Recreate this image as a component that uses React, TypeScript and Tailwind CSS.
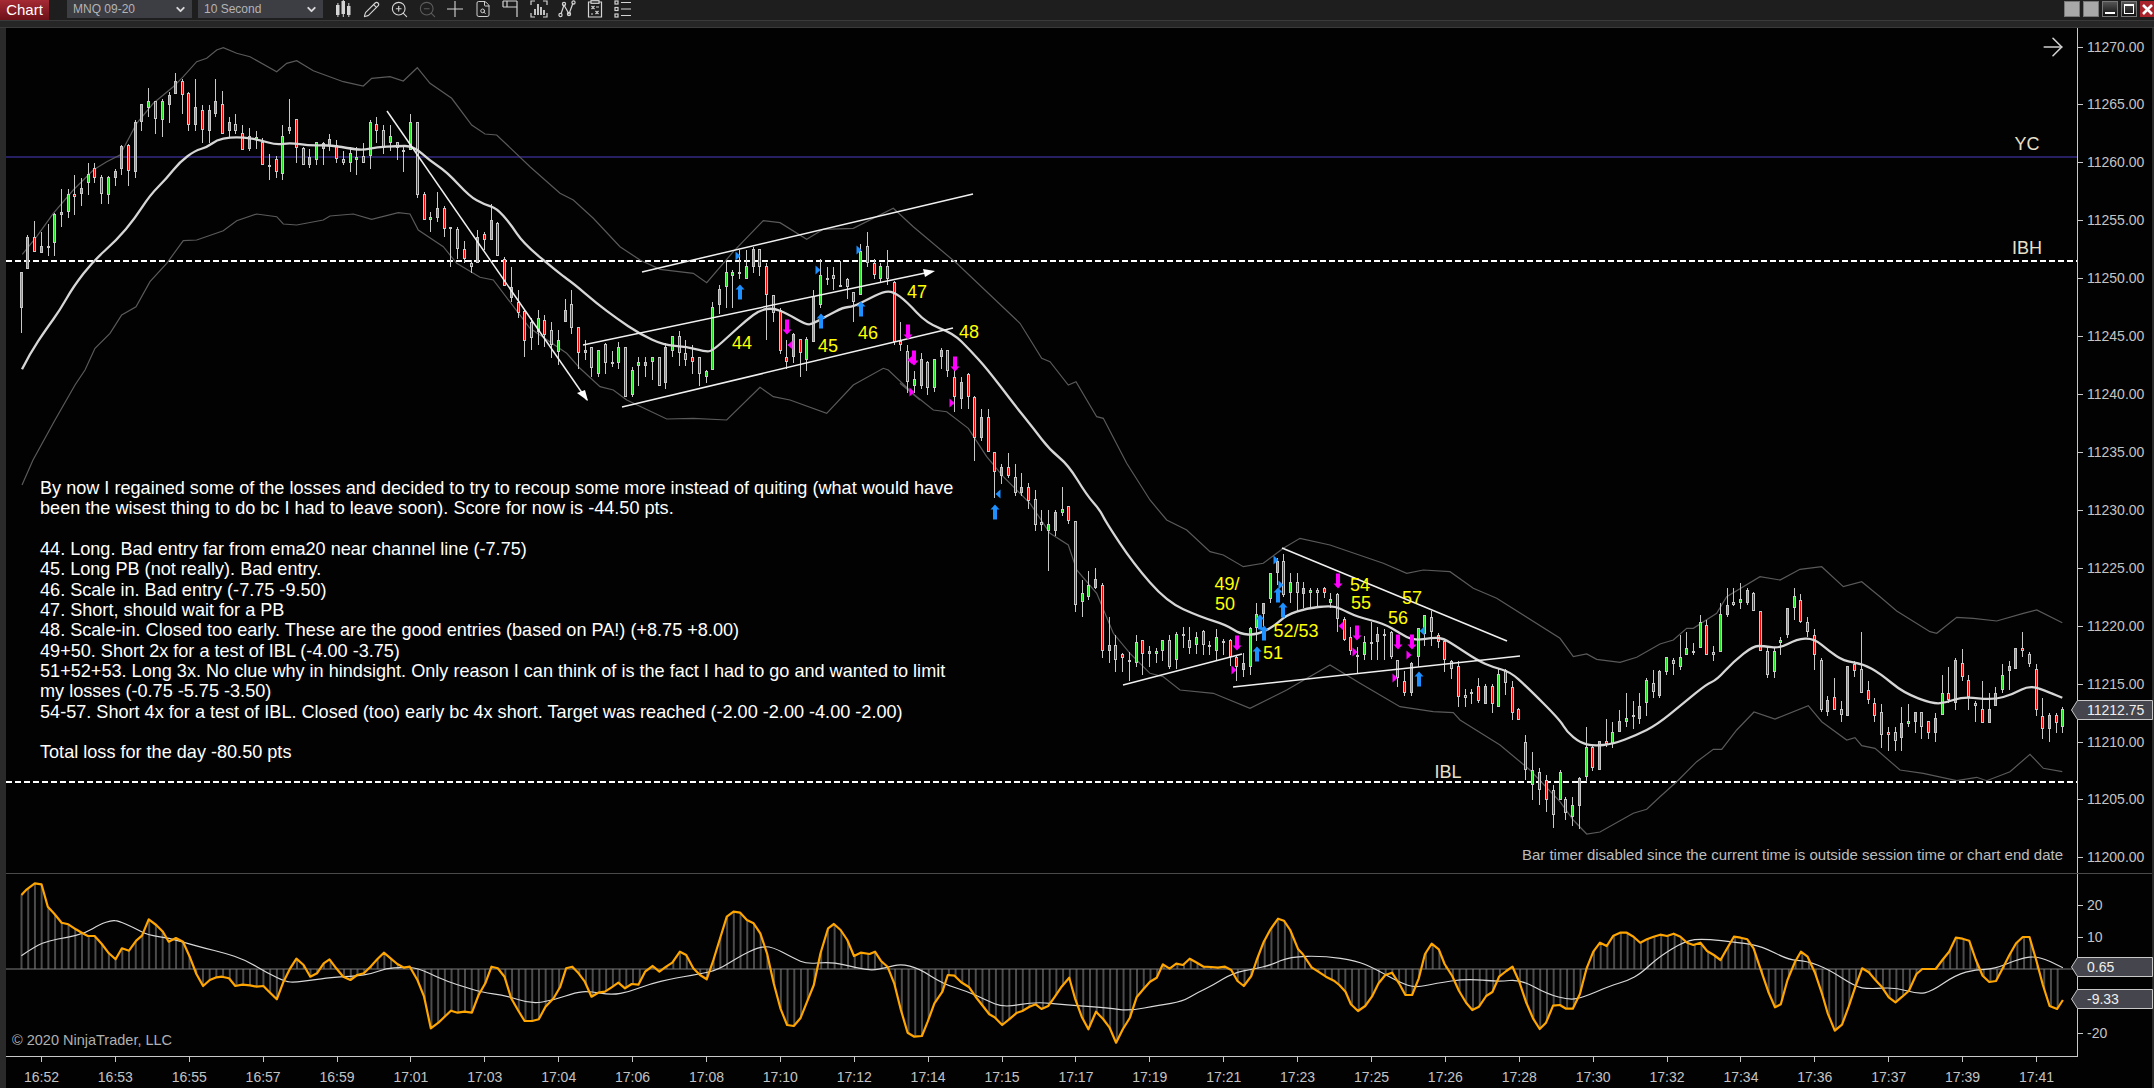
import { ArrowRight, ChevronDown, FileSearch, Pencil, ZoomIn, ZoomOut } from "lucide-react"

type Pt = [number, number]

// chart data read off the screen, each block in its own crop coordinates
function toPts(ox: number, oy: number, sx: number, sy: number, raw: string): Pt[] {
  return raw
    .trim()
    .split(/\s+/)
    .map((p) => {
      const [x, y] = p.split(",").map(Number)
      return [ox + x / sx, oy + y / sy] as Pt
    })
}

const asPath = (pts: Pt[]) => pts.map((p) => `${p[0].toFixed(1)},${p[1].toFixed(1)}`).join(" ")

// rounds the corners off a hand-read line
function smooth(pts: Pt[]) {
  let d = `M${pts[0][0].toFixed(1)} ${pts[0][1].toFixed(1)}`
  for (let i = 1; i < pts.length - 1; i++) {
    const mx = (pts[i][0] + pts[i + 1][0]) / 2
    const my = (pts[i][1] + pts[i + 1][1]) / 2
    d += ` Q${pts[i][0].toFixed(1)} ${pts[i][1].toFixed(1)} ${mx.toFixed(1)} ${my.toFixed(1)}`
  }
  const last = pts[pts.length - 1]
  return `${d} L${last[0].toFixed(1)} ${last[1].toFixed(1)}`
}

const ema = [
  ...toPts(10, 30, 3, 3, "36,1018 60,970 110,895 150,840 190,770 250,693 320,630 375,565 420,495 470,445 510,395 555,362 590,352 620,330 660,322 700,322 750,330 800,345 840,338 900,347 960,345 1030,357 1060,360 1100,352 1160,348 1210,348 1260,392 1310,425 1380,500 1420,522 1460,535 1500,580 1540,640"),
  ...toPts(560, 180, 3, 3, "0,282 40,310 110,370 170,415 240,462 310,495 380,500 440,516 460,510 510,465 560,420 600,390 640,384 680,400 740,435 760,430 800,408 850,382 880,380 920,360 970,335 1000,335 1040,365 1100,430 1180,460 1230,510 1280,565"),
  ...toPts(900, 300, 3, 3, "340,310 400,385 450,450 505,495 560,585 600,630"),
  ...toPts(1100, 520, 3, 3, "20,10 100,130 200,245 300,290 380,315 420,342 470,345 520,320 560,285 620,265 690,257 720,265 770,290 850,310 900,340 940,362 1000,353 1030,355 1070,380 1130,420 1180,442 1230,455 1280,500"),
  ...toPts(1560, 540, 3, 3, "0,540 20,575 60,608 100,618 160,612 230,585 290,555 370,490 440,432 470,420 520,365 580,318 610,318 660,325 710,298 760,294 810,335 850,362 910,372 960,400 1030,458 1120,492 1160,487 1210,470 1300,480 1360,462 1410,435 1470,458 1507,473"),
]

const upperBand = [
  ...toPts(10, 30, 3, 3, "37,673 80,620 130,550 190,480 250,420 290,395 330,375 380,280 430,220 490,170 520,140 560,95 590,85 620,60 640,53 680,70 720,80 800,125 830,100 860,92 910,122 1000,155 1060,168 1085,145 1140,140 1180,153 1222,113 1260,160 1325,205 1385,285 1425,312 1460,315 1560,410"),
  ...toPts(560, 180, 3, 3, "0,40 40,60 100,115 180,200 240,240 300,268 400,280 440,308 520,215 610,122 660,128 740,178 790,148 880,145 1000,85 1060,140 1190,250"),
  ...toPts(900, 300, 3, 3, "360,70 425,175 450,185 505,255 528,245 590,350 610,355 680,490 750,600"),
  ...toPts(1100, 520, 3, 3, "200,0 260,30 330,95 370,105 430,140 490,130 550,85 600,55 690,75 850,130 920,160 970,150 1050,155 1120,205 1190,235"),
  ...toPts(1560, 540, 3, 3, "0,295 40,350 80,342 110,358 180,367 230,352 300,312 340,300 380,265 400,265 470,220 500,170 600,110 660,120 720,88 785,80 850,140 905,125 960,170 1010,213 1110,275 1130,280 1190,232 1240,235 1310,243 1390,220 1430,210 1507,248"),
]

const lowerBand = [
  ...toPts(0, 0, 1, 1, "22,485 33,460 55,420 75,385"),
  ...toPts(10, 30, 3, 3, "225,1020 255,955 300,910 335,855 378,830 420,755 470,700 520,632 560,630 640,602 680,572 740,552 800,560 820,582 860,585 940,570 960,558 1030,552 1085,568 1165,548 1200,552 1225,600 1300,650 1340,700 1410,742 1450,750 1560,895"),
  ...toPts(560, 180, 3, 3, "20,520 60,565 120,620 160,630 200,660 320,717 400,715 500,720 600,622 640,650 690,660 800,700 880,615 970,565 985,570 1080,660"),
  ...toPts(900, 300, 3, 3, "0,250 100,330 140,335 205,385 260,470 310,530 390,610 450,700 505,735 530,810 590,880 640,1000 690,1060 750,1120"),
  ...toPts(1100, 520, 3, 3, "190,470 240,510 340,520 450,565 560,510 690,435 780,490 900,560 1000,575 1060,578 1080,600 1200,675 1290,750"),
  ...toPts(1560, 540, 3, 3, "0,785 40,840 80,882 120,876 220,820 260,808 300,770 350,725 410,665 460,628 485,628 530,570 582,516 645,537 745,497 785,545 860,600 885,593 905,617 945,625 1020,690 1090,700 1190,722 1250,712 1280,722 1350,695 1410,643 1450,685 1507,695"),
]

const orange = [
  ...toPts(0, 860, 2.24, 3, "48,105 60,88 78,70 93,73 107,140 122,162 138,188 153,193 170,208 185,220 197,228 212,228 228,252 244,280 259,298 273,265 289,272 305,242 318,227 333,178 350,195 365,215 378,245 394,234 410,245 425,290 440,342 455,378 470,360 485,352 497,350 513,355 527,378 543,374 560,376 575,380 590,378 605,398 620,418 635,365 650,325 664,296 680,315 695,350 710,340 725,310 738,298 753,325 769,350 785,360 800,345 815,340 830,320 845,298 860,278 875,295 890,312 905,323 918,320 935,360 950,410 965,505 982,488 1010,452 1025,458 1040,455 1057,458 1072,405 1087,370 1101,320 1115,325 1130,350 1145,415 1160,450 1175,483 1192,483 1207,478 1222,440 1240,415 1255,380 1268,325 1282,320 1296,340 1310,365 1325,410 1340,398 1355,395 1370,382 1385,368 1400,385 1415,372 1430,374 1445,335 1462,318 1477,335 1492,320 1506,308 1523,275 1537,285 1553,325"),
  ...toPts(700, 870, 2.24, 3, "0,315 15,328 30,270 45,205 60,140 75,125 90,128 105,150 120,160 135,190 150,250 165,340 180,415 195,465 210,468 225,445 240,395 255,345 270,250 287,175 300,162 315,180 330,210 345,258 360,248 380,252 392,245 405,272 420,290 435,340 450,420 465,488 480,500 497,498 510,455 525,400 543,365 555,315 570,317 585,337 603,352 620,385 648,433 660,442 677,465 695,445 710,428 722,423 738,410 752,403 765,417 780,408 795,380 810,350 827,323 840,385 855,440 870,478 887,425 903,447 917,472 932,518 947,478 963,443 978,382 993,358 1008,335 1023,323 1037,283 1052,296 1067,281 1082,285 1097,266 1113,278 1128,290 1145,291 1160,293 1176,290 1190,300 1204,333 1218,348 1235,318 1247,270 1263,215 1278,178 1295,146 1308,152 1322,180 1340,238 1350,252 1370,292 1385,305 1402,320 1420,332 1432,345 1446,365 1458,403 1474,423 1490,408 1505,380 1520,340 1535,315 1550,308"),
  ...toPts(1400, 870, 2.24, 3, "0,345 12,375 27,375 42,325 56,252 71,221 87,238 100,282 117,318 132,362 148,398 162,420 177,410 193,378 207,366 222,320 238,303 252,290 267,335 282,395 298,445 313,477 327,458 343,407 358,405 372,416 387,416 403,372 418,295 433,245 448,218 463,228 478,197 493,188 508,188 523,200 538,218 553,208 568,200 583,194 598,198 613,191 628,200 643,218 657,225 673,218 688,243 703,255 718,270 733,235 748,200 763,203 778,208 792,235 807,295 825,365 840,412 853,403 868,330 885,275 898,245 913,260 930,310 945,370 958,430 974,482 990,464 1005,410 1020,350 1035,295 1050,307 1065,330 1080,352 1095,382 1110,397 1125,380 1140,362 1157,312 1170,297 1200,297 1215,270 1230,245 1245,203 1260,206 1275,212 1290,270 1305,317 1320,336 1335,333 1350,295 1365,255 1380,220 1395,201 1410,201 1425,270 1440,345 1455,408 1472,417 1485,390"),
]

const signal = [
  ...toPts(0, 860, 2.24, 3, "48,287 80,258 110,242 150,232 190,220 225,192 250,181 265,183 300,203 330,225 380,235 420,250 460,265 500,278 550,300 600,340 640,365 660,367 700,360 740,353 800,347 830,342 865,325 900,322 935,323 985,355 1020,372 1080,398 1130,405 1190,432 1240,420 1290,397 1320,394 1370,405 1410,395 1460,370 1500,358 1530,350"),
  ...toPts(700, 870, 2.24, 3, "0,312 40,300 90,258 130,232 160,229 210,265 240,282 285,276 320,283 380,303 420,292 450,282 490,295 545,342 600,365 640,390 680,413 750,395 820,405 915,413 960,423 1030,405 1080,395 1115,367 1150,345 1195,308 1240,297 1280,285 1320,260 1400,258 1470,272 1510,295"),
  ...toPts(1400, 870, 2.24, 3, "0,338 35,353 80,340 150,326 220,335 270,328 330,372 380,390 410,382 470,348 510,332 540,310 580,260 640,212 680,206 760,218 810,228 870,270 910,272 960,298 1020,350 1050,357 1110,352 1160,372 1190,365 1245,315 1290,298 1330,298 1390,265 1430,258 1485,293"),
]

// x wickTop bodyTop bodyBottom wickBottom colour
const candleBlocks: { ox: number; oy: number; s: number; rows: string }[] = [
  {
    ox: 10, oy: 30, s: 3,
    rows: `34 727 727 833 910 g|52 615 622 718 718 g|73 573 622 667 667 r|94 607 648 668 668 g|113 583 648 652 678 g|133 548 553 640 677 g|154 477 545 554 590 g|175 478 493 545 563 g|193 435 493 502 555 r|214 445 475 493 527 g|235 400 433 458 495 g|253 400 415 443 458 r|274 435 441 493 521 r|295 437 441 494 521 g|316 418 423 443 467 g|334 345 347 416 435 g|355 343 346 424 467 r|376 270 277 425 443 g|394 222 223 277 302 g|415 175 213 233 260 g|436 213 214 268 311 r|457 208 212 269 320 g|476 185 195 224 278 g|496 130 154 191 191 g|517 148 154 196 251 r|535 185 190 284 302 r|556 148 232 284 302 g|577 226 241 301 338 r|598 226 240 302 338 g|616 148 214 251 260 g|637 183 223 311 311 r|658 262 277 302 320 g|676 252 283 302 312 r|697 285 310 361 361 r|718 295 319 356 362 g|739 304 320 329 356 g|757 325 337 406 406 r|778 372 405 407 449 g|799 378 388 425 443 r|817 285 319 433 449 g|838 208 292 302 312 g|859 268 268 355 398 r|880 350 355 406 406 r|898 358 381 406 415 g|919 337 337 389 406 g|940 335 338 356 406 g|958 312 328 348 362 g|979 330 346 388 398 r|1000 362 388 398 406 r|1021 350 370 398 426 g|1039 350 381 389 434 g|1060 340 379 398 398 r|1081 270 277 377 416 g|1099 262 283 302 338 r|1120 285 301 350 371 r|1141 285 319 338 362 g|1162 337 337 355 389 r|1180 350 360 362 425 g|1201 253 277 361 361 g|1222 277 277 494 503 r|1243 487 493 571 571 r|1261 546 562 571 605 g|1282 487 535 563 577 g|1303 527 535 598 622 r|1321 590 590 598 710 r|1342 590 597 658 686 r|1363 633 658 686 700 r|1384 690 700 710 728 r|1402 600 622 700 700 g|1423 605 613 631 660 r|1444 522 571 631 631 g|1462 575 580 677 677 r|1483 680 686 768 768 r|1504 712 770 805 815 g|1525 780 815 850 865 r|1543 840 843 934 980 r`,
  },
  {
    ox: 0, oy: 0, s: 1,
    rows: `531 318 322 338 350 r|538 310 318 332 345 g|544 315 320 335 347 r|551 322 330 345 358 r|558 330 340 352 365 g`,
  },
  {
    ox: 560, oy: 180, s: 3,
    rows: `15 358 390 425 425 g|33 330 372 443 461 r|55 441 441 520 566 r|76 480 510 520 540 g|94 500 502 565 590 r|115 510 510 581 590 g|136 490 492 548 581 r|157 513 546 550 560 g|175 487 502 548 566 g|196 502 502 650 650 r|217 560 570 645 650 g|235 530 547 557 617 g|256 530 547 557 590 g|277 530 530 547 600 g|298 530 530 617 617 r|316 490 500 608 627 g|337 467 468 512 530 g|358 454 468 520 558 r|376 480 520 540 558 r|397 495 530 547 581 r|418 530 530 581 617 r|439 570 572 590 608 g|457 366 381 571 571 g|478 316 328 374 402 g|499 245 277 320 384 g|517 270 277 287 384 g|538 210 277 279 296 g|559 210 259 296 296 g|580 200 208 260 278 g|598 206 208 260 287 r|619 250 258 346 480 r|640 346 346 400 426 r|661 385 391 512 521 r|679 480 530 546 566 r|700 459 461 530 548 g|721 477 478 520 590 r|739 472 478 540 572 g|760 330 349 485 485 g|781 238 286 374 384 g|802 262 294 296 314 g|820 262 286 296 330 r|841 242 314 316 320 g|862 294 296 320 356 r|880 336 337 366 426 r|901 193 212 346 346 g|922 156 199 250 260 r|943 238 250 286 296 r|961 250 259 296 306 g|982 210 259 296 314 r|1003 304 305 485 495 r|1021 426 482 495 512 r|1042 495 512 607 640 r|1063 572 598 617 640 g|1084 520 538 617 627 g|1102 542 546 625 645 r|1123 538 538 625 635 g|1144 504 511 530 566 g|1162 510 511 572 590 r|1183 560 590 650 695 r|1204 590 606 658 686 g|1225 580 581 650 686 r`,
  },
  {
    ox: 900, oy: 300, s: 3,
    rows: `223 288 290 413 482 r|244 328 352 413 422 g|265 328 352 455 455 r|283 455 455 517 595 r|304 492 500 528 552 g|325 458 500 527 533 r|346 492 532 578 587 r|364 520 560 578 587 g|385 550 560 604 628 r|406 571 596 674 692 r|424 631 665 674 692 r|445 631 673 692 812 g|466 631 636 692 707 g|487 562 628 638 647 g|505 617 619 664 672 r|526 664 664 916 935 r|547 840 880 907 950 g|565 813 856 890 900 g|586 805 838 863 868 g|607 850 856 1054 1073 r|628 950 1036 1054 1090 g|646 1006 1036 1080 1115 r|667 1058 1063 1073 1115 r|688 1056 1080 1082 1142 g|709 1006 1027 1090 1100 g|727 1020 1021 1063 1124 r|748 1038 1054 1063 1100 g|769 1045 1054 1063 1090 g|787 1020 1021 1054 1082 g|808 1006 1021 1100 1108 r|829 996 1003 1080 1108 g|850 980 1002 1004 1045 g|868 980 1021 1045 1063 r|889 996 1012 1036 1063 g`,
  },
  {
    ox: 1100, oy: 520, s: 3,
    rows: `310 330 332 376 405 r|328 363 376 378 405 g|349 328 352 394 420 g|370 358 362 368 405 g|391 358 360 412 437 r|409 405 410 440 482 r|430 400 430 449 472 g|451 322 325 440 465 g|469 248 283 325 362 g|490 248 248 283 318 g|511 158 160 238 250 g|532 115 124 160 195 g|550 102 124 226 232 r|571 158 187 220 250 g|592 158 187 220 275 r|610 187 203 222 265 g|631 205 211 220 262 g|652 205 211 220 265 r|673 202 203 220 235 r|691 220 238 248 265 g|712 220 221 298 335 r|733 292 298 360 362 r|751 320 352 393 404 r|772 380 405 408 458 g|793 347 367 404 420 g|814 305 367 369 420 g|832 322 343 367 420 g|853 326 342 344 420 g|874 333 335 412 418 r|892 420 420 475 500 r|913 452 482 520 528 r|934 425 430 518 528 g|955 325 325 412 440 g|973 284 284 343 378 g|994 272 290 335 378 r|1015 340 344 367 385 r|1033 360 362 420 455 r|1054 420 422 448 476 r|1075 424 438 532 560 r|1096 506 526 533 560 r|1114 506 517 523 553 g|1135 475 498 542 550 r|1156 492 498 552 553 g|1177 492 498 552 578 r|1195 447 462 560 560 g|1216 448 450 490 525 r|1237 483 500 578 600 r|1255 565 567 600 600 r`,
  },
  {
    ox: 0, oy: 0, s: 1,
    rows: `1525 735 742 770 780 r|1532 752 770 785 800 g|1539 768 772 790 805 r|1546 775 780 800 812 r|1553 785 790 815 828 r|1560 770 772 800 800 g`,
  },
  {
    ox: 1560, oy: 540, s: 3,
    rows: `16 771 778 820 840 r|37 771 796 830 858 g|58 712 715 797 866 g|79 561 622 710 725 g|97 615 622 683 693 r|118 604 604 691 691 g|139 538 604 613 622 r|157 546 577 612 623 g|178 510 544 577 577 g|199 460 535 545 560 g|220 484 525 527 568 g|238 460 499 536 552 g|259 415 420 490 528 g|280 390 430 457 473 r|298 390 394 467 473 g|319 352 352 395 404 g|340 355 361 371 404 r|361 285 352 380 391 g|379 276 325 344 345 g|400 309 334 336 345 g|421 226 247 325 325 g|439 240 256 344 344 r|460 319 335 344 362 r|481 190 223 335 335 g|502 144 196 224 232 g|520 144 187 196 198 r|541 129 178 188 207 g|562 144 151 188 196 g|580 155 160 214 214 r|601 214 214 334 334 r|622 320 333 404 414 r|643 320 333 395 414 g|661 290 300 309 345 g|682 205 205 285 295 g|703 144 169 205 240 g|721 163 179 247 250 r|742 232 247 275 291 r|763 267 284 344 390 r|784 354 361 510 517 r|802 469 481 517 527 g|823 414 472 509 510 r|844 484 508 526 546 r|862 378 379 527 527 g|883 364 371 394 412 r|904 276 388 458 458 r|925 423 449 481 491 r|943 475 490 527 546 r|964 492 517 586 623 r|985 562 577 586 632 r|1006 562 577 604 632 r|1024 502 550 595 632 g|1045 492 544 552 560 g|1066 516 517 545 578 g|1084 515 517 560 596 r|1105 544 544 578 596 r|1126 520 535 578 605 g|1147 405 458 526 526 g|1165 382 458 481 490 r|1186 354 361 490 510 g|1207 327 370 412 422 r|1225 405 421 472 510 r|1246 484 490 499 545 r|1267 423 508 550 550 r|1288 460 508 550 550 g|1306 442 458 499 499 g|1327 373 404 450 458 g|1348 364 379 394 450 g|1366 325 325 388 388 g|1387 277 325 334 352 r|1408 337 343 371 381 r|1429 373 388 509 527 r|1447 475 527 568 596 r|1468 520 526 568 605 g|1489 518 526 550 578 r|1507 502 508 560 578 g`,
  },
]

const candles = candleBlocks.flatMap((b) =>
  b.rows.split("|").map((r) => {
    const f = r.split(" ")
    const n = f.slice(0, 5).map(Number)
    return {
      x: Math.round(b.ox + n[0] / b.s),
      high: Math.round(b.oy + n[1] / b.s),
      top: Math.round(b.oy + n[2] / b.s),
      bottom: Math.round(b.oy + n[3] / b.s),
      low: Math.round(b.oy + n[4] / b.s),
      up: f[5] === "g",
    }
  })
)

function valueAt(pts: Pt[], x: number) {
  for (let i = 1; i < pts.length; i++) {
    if (x <= pts[i][0]) {
      const [x0, y0] = pts[i - 1]
      const [x1, y1] = pts[i]
      return y0 + ((y1 - y0) * (x - x0)) / (x1 - x0 || 1)
    }
  }
  return pts[pts.length - 1][1]
}

const upArrow = (cx: number, cy: number) =>
  `${cx},${cy - 7.5} ${cx + 4.5},${cy - 2.5} ${cx + 2},${cy - 2.5} ${cx + 2},${cy + 7.5} ${cx - 2},${cy + 7.5} ${cx - 2},${cy - 2.5} ${cx - 4.5},${cy - 2.5}`
const downArrow = (cx: number, cy: number) =>
  `${cx},${cy + 7.5} ${cx + 4.5},${cy + 2.5} ${cx + 2},${cy + 2.5} ${cx + 2},${cy - 7.5} ${cx - 2},${cy - 7.5} ${cx - 2},${cy + 2.5} ${cx - 4.5},${cy + 2.5}`
const rightTri = (cx: number, cy: number) => `${cx - 2.5},${cy - 4.5} ${cx + 2.5},${cy} ${cx - 2.5},${cy + 4.5}`
const leftTri = (cx: number, cy: number) => `${cx + 2.5},${cy - 4.5} ${cx - 2.5},${cy} ${cx + 2.5},${cy + 4.5}`

const BLUE = "#1e90ff"
const PINK = "#ff00ff"

const markers: { points: string; fill: string }[] = [
  ...([[740, 292], [821, 321], [861, 309], [995, 512], [1257, 654], [1264, 633], [1283, 610], [1278, 595], [1419, 679], [1260, 622]] as Pt[]).map((p) => ({ points: upArrow(p[0], p[1]), fill: BLUE })),
  ...([[738, 256], [818, 270], [859, 250], [1276, 560], [1281, 585]] as Pt[]).map((p) => ({ points: rightTri(p[0], p[1]), fill: BLUE })),
  ...([[1422, 631], [998, 494]] as Pt[]).map((p) => ({ points: leftTri(p[0], p[1]), fill: BLUE })),
  ...([[787, 327], [908, 332], [914, 358], [955, 364], [1237, 643], [1338, 581], [1357, 633], [1398, 642], [1412, 642]] as Pt[]).map((p) => ({ points: downArrow(p[0], p[1]), fill: PINK })),
  ...([[912, 392], [952, 403], [1234, 670], [1355, 652], [1395, 678], [1409, 655]] as Pt[]).map((p) => ({ points: rightTri(p[0], p[1]), fill: PINK })),
  ...([[790, 345], [910, 360], [1341, 626]] as Pt[]).map((p) => ({ points: leftTri(p[0], p[1]), fill: PINK })),
]

const trendLines = [
  [387, 111, 587, 400],
  [642, 272, 973, 194],
  [583, 345, 930, 272],
  [622, 407, 953, 328],
  [1282, 548, 1507, 641],
  [1123, 685, 1242, 654],
  [1233, 687, 1520, 656],
]

const barXs = Array.from({ length: 304 }, (_, i) => 21.5 + i * 6.72)

const noteLines = [
  "By now I regained some of the losses and decided to try to recoup some more instead of quiting (what would have",
  "been the wisest thing to do bc I had to leave soon). Score for now is -44.50 pts.",
  "",
  "44. Long. Bad entry far from ema20 near channel line (-7.75)",
  "45. Long PB (not really). Bad entry.",
  "46. Scale in. Bad entry (-7.75 -9.50)",
  "47. Short, should wait for a PB",
  "48. Scale-in. Closed too early. These are the good entries (based on PA!) (+8.75 +8.00)",
  "49+50. Short 2x for a test of IBL (-4.00 -3.75)",
  "51+52+53. Long 3x. No clue why in hindsight. Only reason I can think of is the fact I had to go and wanted to limit",
  "my losses (-0.75 -5.75 -3.50)",
  "54-57. Short 4x for a test of IBL. Closed (too) early bc 4x short. Target was reached (-2.00 -2.00 -4.00 -2.00)",
  "",
  "Total loss for the day -80.50 pts",
]

const prices = ["11270.00", "11265.00", "11260.00", "11255.00", "11250.00", "11245.00", "11240.00", "11235.00", "11230.00", "11225.00", "11220.00", "11215.00", "11210.00", "11205.00", "11200.00"]

const times = ["16:52", "16:53", "16:55", "16:57", "16:59", "17:01", "17:03", "17:04", "17:06", "17:08", "17:10", "17:12", "17:14", "17:15", "17:17", "17:19", "17:21", "17:23", "17:25", "17:26", "17:28", "17:30", "17:32", "17:34", "17:36", "17:37", "17:39", "17:41"]

function CandlesIcon() {
  return (
    <svg width="18" height="18" viewBox="0 0 18 18" fill="#d4d4d4">
      <rect x="2" y="5" width="3.5" height="10" />
      <rect x="3.4" y="3" width="1" height="14" />
      <rect x="7.5" y="1" width="3.5" height="13" />
      <rect x="8.8" y="0" width="1" height="17" />
      <rect x="13" y="6" width="3.5" height="9" />
      <rect x="14.3" y="3" width="1" height="14" />
    </svg>
  )
}

function PropertiesIcon() {
  return (
    <svg width="18" height="18" viewBox="0 0 18 18" fill="none" stroke="#d4d4d4" strokeWidth="1.2">
      <path d="M1 1h14M15 1v16M1 7h14M1 1v6" />
      <path d="M5 1v6" />
    </svg>
  )
}

function BarsIcon() {
  return (
    <svg width="18" height="18" viewBox="0 0 18 18" fill="none" stroke="#d4d4d4" strokeWidth="1.2">
      <path d="M1 5V1h4M13 1h4v4M1 13v4h4M13 17h4v-4" />
      <path d="M5 15V9M8 15V4M11 15V7M14 15V10" strokeWidth="1.8" />
    </svg>
  )
}

function NodesIcon() {
  return (
    <svg width="18" height="18" viewBox="0 0 18 18" fill="none" stroke="#d4d4d4" strokeWidth="1.2">
      <path d="M3 14 6 5l5 9 4-11" />
      <circle cx="2.5" cy="15" r="1.6" />
      <circle cx="6" cy="4" r="1.6" />
      <circle cx="11" cy="14" r="1.6" />
      <circle cx="15.5" cy="2.5" r="1.6" />
    </svg>
  )
}

function StrategyIcon() {
  return (
    <svg width="18" height="18" viewBox="0 0 18 18" fill="none" stroke="#d4d4d4" strokeWidth="1.2">
      <path d="M5 2H2.5v15h13V2H13" />
      <rect x="5" y="0.7" width="8" height="2.6" />
      <path d="m5.5 6 3 3M8.5 6l-3 3M9.5 11l3 3M12.5 11l-3 3M7 14h-2M13 7h-3" />
    </svg>
  )
}

function ListIcon() {
  return (
    <svg width="18" height="18" viewBox="0 0 18 18" fill="none" stroke="#d4d4d4" strokeWidth="1.2">
      <rect x="1" y="1" width="3" height="3" />
      <rect x="1" y="7.5" width="3" height="3" />
      <rect x="1" y="14" width="3" height="3" />
      <path d="M7 2.5h10M7 9h10M7 15.5h10" />
    </svg>
  )
}

function Dropdown({ label }: { label: string }) {
  return (
    <div className="flex h-[18px] w-[125px] items-center justify-between bg-[#3d3d44] pl-[6px] pr-[5px] text-[12px] text-[#b4b4b4]">
      <span>{label}</span>
      <ChevronDown size={13} strokeWidth={3.5} className="text-[#d8d8d8]" />
    </div>
  )
}

function Toolbar() {
  const iconBox = "flex h-[18px] w-[28px] items-center justify-center"
  return (
    <div className="flex h-[20px] items-start bg-[#1e1e1e]">
      <div className="flex h-[20px] w-[49px] items-center justify-center bg-gradient-to-b from-[#a52a34] to-[#6e1018] text-[15px] text-white">
        Chart
      </div>
      <div className="ml-[18px] flex gap-[6px]">
        <Dropdown label="MNQ 09-20" />
        <Dropdown label="10 Second" />
      </div>
      <div className="ml-[6px] flex">
        <div className={iconBox}><CandlesIcon /></div>
        <div className={iconBox}><Pencil size={17} strokeWidth={1.6} className="text-[#d4d4d4]" /></div>
        <div className={iconBox}><ZoomIn size={19} strokeWidth={1.4} className="text-[#d4d4d4]" /></div>
        <div className={iconBox}><ZoomOut size={19} strokeWidth={1.4} className="text-[#5c5c5c]" /></div>
        <div className={iconBox}>
          <svg width="18" height="18" viewBox="0 0 18 18" stroke="#d4d4d4" strokeWidth="1.1"><path d="M9 1v16M1 9h16" /></svg>
        </div>
        <div className={iconBox}><FileSearch size={18} strokeWidth={1.3} className="text-[#d4d4d4]" /></div>
        <div className={iconBox}><PropertiesIcon /></div>
        <div className={iconBox}><BarsIcon /></div>
        <div className={iconBox}><NodesIcon /></div>
        <div className={iconBox}><StrategyIcon /></div>
        <div className={iconBox}><ListIcon /></div>
      </div>
      <div className="ml-auto flex gap-[3px] pt-px">
        <div className="h-[16px] w-[16px] border border-[#777] bg-[#a8a8a8]" />
        <div className="h-[16px] w-[16px] border border-[#777] bg-[#a8a8a8]" />
        <div className="flex h-[16px] w-[16px] items-end justify-center border border-[#777] bg-gradient-to-b from-[#555] to-[#111] pb-[2px]">
          <div className="h-[2px] w-[10px] bg-white" />
        </div>
        <div className="flex h-[16px] w-[16px] items-center justify-center border border-[#777] bg-gradient-to-b from-[#555] to-[#111]">
          <div className="h-[10px] w-[10px] border border-t-2 border-white" />
        </div>
        <div className="flex h-[16px] w-[14px] items-center justify-center bg-[#a8232c] text-white">
          <svg width="11" height="11" viewBox="0 0 11 11" stroke="#fff" strokeWidth="2.6"><path d="m1 1 9 9M10 1l-9 9" /></svg>
        </div>
      </div>
    </div>
  )
}

function PriceTag({ label, className }: { label: string; className: string }) {
  return (
    <div className={`absolute left-[-7px] flex h-[20px] w-[82px] items-center ${className}`}>
      <svg width="82" height="20" viewBox="0 0 82 20" className="absolute inset-0">
        <polygon points="0.5,10 6.5,0.5 81.5,0.5 81.5,19.5 6.5,19.5" fill="#45454d" stroke="#c8c8c8" />
      </svg>
      <span className="relative pl-[16px] text-[14px] text-[#eeeeee]">{label}</span>
    </div>
  )
}

function AxisRow({ label, className = "" }: { label: string; className?: string }) {
  return (
    <div className={`flex h-0 items-center ${className}`}>
      <div className="h-px w-[5px] bg-[#c8c8c8]" />
      <span className="ml-[4px] text-[14px] text-[#c4c4c4]">{label}</span>
    </div>
  )
}

function MainPlot() {
  return (
    <div className="relative h-[845px] w-[2071px] overflow-hidden bg-[#020202]">
      <svg width="2071" height="845" viewBox="6 28 2071 845" className="block">
        <line x1="6" x2="2077" y1="157" y2="157" stroke="#4a3fc4" />
        <line x1="6" x2="2077" y1="261" y2="261" stroke="#ffffff" strokeWidth="2" strokeDasharray="6 3" />
        <line x1="6" x2="2077" y1="782" y2="782" stroke="#ffffff" strokeWidth="2" strokeDasharray="6 3" />
        <polyline points={asPath(upperBand)} fill="none" stroke="#5a5a5a" strokeWidth="1.2" />
        <polyline points={asPath(lowerBand)} fill="none" stroke="#5a5a5a" strokeWidth="1.2" />
        <g shapeRendering="crispEdges">
          {candles.map((c, i) => (
            <g key={i}>
              <rect x={c.x} y={c.high} width="1" height={Math.max(c.low - c.high, 1)} fill="#c8c8c8" />
              <rect x={c.x - 1} y={c.top} width="3" height={Math.max(c.bottom - c.top, 2)} fill="#c8c8c8" />
              {c.bottom - c.top > 2 && (
                <rect x={c.x} y={c.top + 1} width="1" height={c.bottom - c.top - 2} fill={c.up ? "#22dd22" : "#ff0000"} />
              )}
            </g>
          ))}
        </g>
        <path d={smooth(ema)} fill="none" stroke="#d6d6d6" strokeWidth="2.3" strokeLinejoin="round" />
        {trendLines.map((l, i) => (
          <line key={i} x1={l[0]} y1={l[1]} x2={l[2]} y2={l[3]} stroke="#f0f0f0" strokeWidth="1.5" />
        ))}
        <polygon points="923,269 935,271 925,277" fill="#ffffff" />
        <polygon points="577,393 588,401 585,390" fill="#ffffff" />
        {markers.map((m, i) => (
          <polygon key={i} points={m.points} fill={m.fill} />
        ))}
      </svg>

      <div className="absolute left-[34px] top-[450px] text-[18.1px] leading-[20.34px] text-white">
        {noteLines.map((line, i) => (
          <div key={i} className="h-[20.34px] whitespace-pre">{line}</div>
        ))}
      </div>

      <span className="absolute left-[736px] top-[315px] -translate-x-1/2 -translate-y-1/2 text-[18px] text-[#ffff00]">44</span>
      <span className="absolute left-[822px] top-[318px] -translate-x-1/2 -translate-y-1/2 text-[18px] text-[#ffff00]">45</span>
      <span className="absolute left-[862px] top-[305px] -translate-x-1/2 -translate-y-1/2 text-[18px] text-[#ffff00]">46</span>
      <span className="absolute left-[911px] top-[264px] -translate-x-1/2 -translate-y-1/2 text-[18px] text-[#ffff00]">47</span>
      <span className="absolute left-[963px] top-[304px] -translate-x-1/2 -translate-y-1/2 text-[18px] text-[#ffff00]">48</span>
      <span className="absolute left-[1221px] top-[556px] -translate-x-1/2 -translate-y-1/2 text-[18px] text-[#ffff00]">49/</span>
      <span className="absolute left-[1219px] top-[576px] -translate-x-1/2 -translate-y-1/2 text-[18px] text-[#ffff00]">50</span>
      <span className="absolute left-[1290px] top-[603px] -translate-x-1/2 -translate-y-1/2 text-[18px] text-[#ffff00]">52/53</span>
      <span className="absolute left-[1267px] top-[625px] -translate-x-1/2 -translate-y-1/2 text-[18px] text-[#ffff00]">51</span>
      <span className="absolute left-[1354px] top-[557px] -translate-x-1/2 -translate-y-1/2 text-[18px] text-[#ffff00]">54</span>
      <span className="absolute left-[1355px] top-[575px] -translate-x-1/2 -translate-y-1/2 text-[18px] text-[#ffff00]">55</span>
      <span className="absolute left-[1392px] top-[590px] -translate-x-1/2 -translate-y-1/2 text-[18px] text-[#ffff00]">56</span>
      <span className="absolute left-[1406px] top-[570px] -translate-x-1/2 -translate-y-1/2 text-[18px] text-[#ffff00]">57</span>

      <span className="absolute left-[2021px] top-[116px] -translate-x-1/2 -translate-y-1/2 text-[18px] text-[#e8e0c8]">YC</span>
      <span className="absolute left-[2021px] top-[220px] -translate-x-1/2 -translate-y-1/2 text-[18px] text-[#e8e0c8]">IBH</span>
      <span className="absolute left-[1442px] top-[744px] -translate-x-1/2 -translate-y-1/2 text-[18px] text-[#e8e0c8]">IBL</span>

      <ArrowRight size={30} strokeWidth={1.3} className="absolute left-[2032px] top-[4px] text-[#d0d0d0]" />
      <span className="absolute right-[14px] top-[827px] -translate-y-1/2 text-[15px] text-[#bdbdbd]">
        Bar timer disabled since the current time is outside session time or chart end date
      </span>
    </div>
  )
}

function IndicatorPlot() {
  return (
    <div className="relative h-[182px] w-[2071px] overflow-hidden bg-[#020202]">
      <svg width="2071" height="182" viewBox="6 874 2071 182" className="block">
        {barXs.map((x) => (
          <line key={x} x1={x} x2={x} y1="969" y2={valueAt(orange, x)} stroke="#4c4c4c" strokeWidth="2" />
        ))}
        <line x1="6" x2="2077" y1="969" y2="969" stroke="#7c7c7c" />
        <path d={smooth(signal)} fill="none" stroke="#d8d8d8" strokeWidth="1.2" />
        <polyline points={asPath(orange)} fill="none" stroke="#ffa500" strokeWidth="2.2" strokeLinejoin="round" />
      </svg>
      <span className="absolute left-[6px] top-[167px] -translate-y-1/2 text-[14.5px] text-[#b0b0b0]">© 2020 NinjaTrader, LLC</span>
    </div>
  )
}

export default function App() {
  return (
    <div className="flex h-[1088px] w-[2154px] flex-col overflow-hidden bg-[#2a2a2a] font-['Liberation_Sans',Arial,sans-serif]">
      <Toolbar />
      <div className="h-[8px] border-y border-[#3a3a3a] bg-[#262626]" />
      <div className="flex flex-1 pl-[6px] pr-[2px]">
        <div className="flex w-full flex-col bg-[#020202]">
          <div className="flex h-[845px]">
            <MainPlot />
            <div className="relative flex-1 border-l border-[#c8c8c8] pt-[19px]">
              <div className="flex flex-col gap-[57.93px]">
                {prices.map((p) => (
                  <AxisRow key={p} label={p} />
                ))}
              </div>
              <PriceTag label="11212.75" className="top-[672px]" />
            </div>
          </div>
          <div className="h-px bg-[#4a4a4a]" />
          <div className="flex h-[182px]">
            <IndicatorPlot />
            <div className="relative flex-1 border-l border-[#c8c8c8] pt-[31px]">
              <AxisRow label="20" />
              <AxisRow label="10" className="mt-[32px]" />
              <AxisRow label="-20" className="mt-[96px]" />
              <PriceTag label="0.65" className="top-[83px]" />
              <PriceTag label="-9.33" className="top-[115px]" />
            </div>
          </div>
          <div className="flex h-[32px] w-[2072px] border-t border-[#c8c8c8]">
            <div className="-ml-[1.5px] flex">
              {times.map((t) => (
                <div key={t} className="flex w-[73.9px] flex-col items-center">
                  <div className="h-[5px] w-px bg-[#c8c8c8]" />
                  <span className="mt-[7px] text-[14px] leading-[16px] text-[#c4c4c4]">{t}</span>
                </div>
              ))}
            </div>
          </div>
        </div>
      </div>
    </div>
  )
}
